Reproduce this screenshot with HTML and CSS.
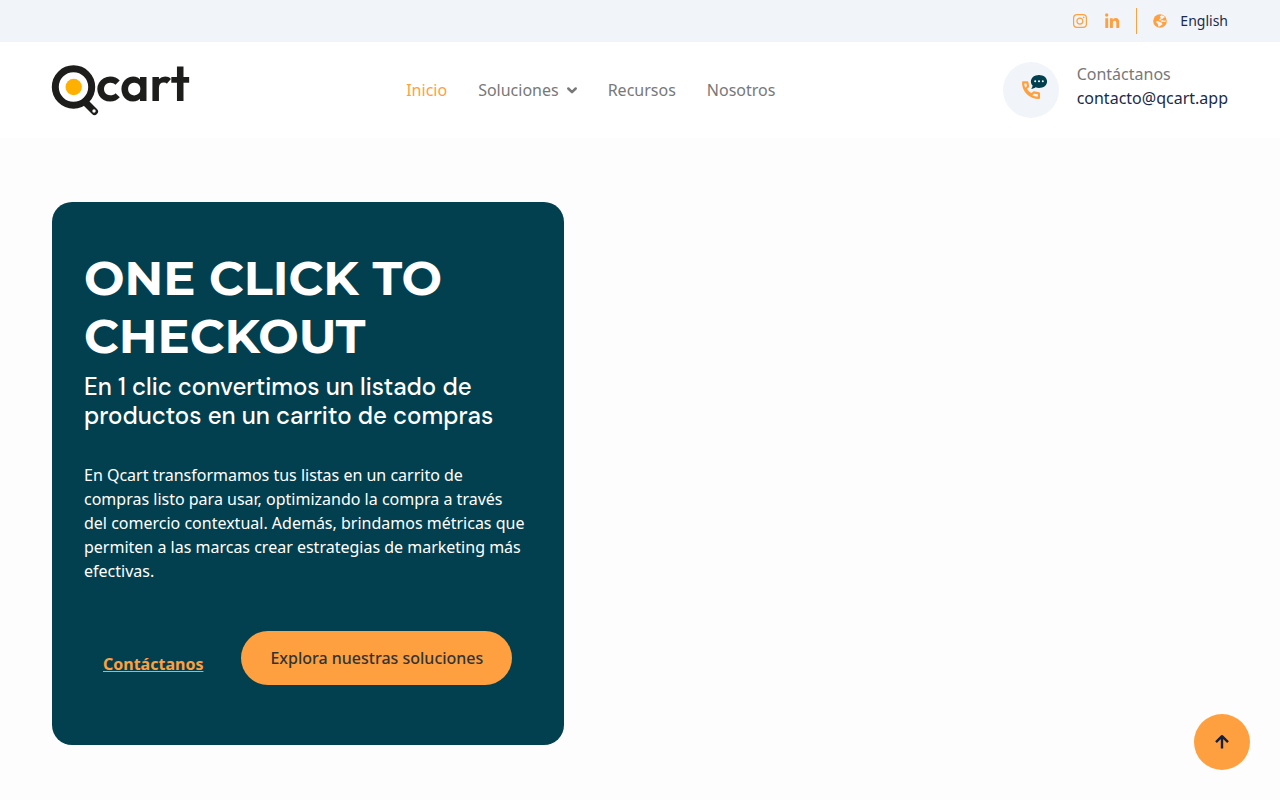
FILE: index.html
```html
<!DOCTYPE html>
<html lang="es">
<head>
  <meta charset="utf-8">
  <meta name="viewport" content="width=device-width, initial-scale=1">
  <title>Qcart</title>
  <link rel="stylesheet" href="styles.css">
</head>
<body>
  <div class="topbar">
    <div class="social">
      <a href="#" aria-label="Instagram">
        <svg width="14" height="14" viewBox="0 0 14 14" fill="none" stroke="currentColor" stroke-width="1.2">
          <rect x="0.6" y="0.6" width="12.8" height="12.8" rx="3.4"/>
          <circle cx="6.9" cy="7.1" r="3"/>
          <circle cx="10.7" cy="3.4" r="0.8" fill="currentColor" stroke="none"/>
        </svg>
      </a>
      <a href="#" aria-label="LinkedIn">
        <svg width="14" height="14" viewBox="0 0 14 14" fill="currentColor">
          <circle cx="1.7" cy="1" r="1.7"/>
          <path d="M.3 4.2h2.900V14H.3zM5 4.200h2.800V6c.5-.9 1.400-1.900 2.800-1.900 2.800 0 3.600 1.800 3.600 4.300V14h-2.900V9.300c0-1.200-.2-2.500-1.600-2.500S7.900 7.900 7.900 9.200V14H5z"/>
        </svg>
      </a>
    </div>
    <a class="language" href="#">
      <svg width="14" height="14" viewBox="0 0 14 14">
        <circle cx="7" cy="7" r="6.800" fill="#ffa040"/>
        <g fill="#f1f5fa">
          <path d="M6.800 2.600l1.900-1.300 2.100.7 1.300 1.300-1.200.2-.9 1.100-1.700.6-.9 1.200-1.300-.5.6-1 1.100-.5-.2-.9z"/>
          <path d="M7.600 7l1.900-1 1.500.7 1.800-.3-.1 1.400-1.600.1-.9-.5-1.200.6z"/>
          <path d="M3.300 7.200l1.700-.2 1.900 1.100 1.900.7.7 1.400-1.400 1.400-1 .2-1.300 1.300-.8-2-.2-1.400-1.300-.9z"/>
        </g>
      </svg>
      English
    </a>
  </div>

  <header class="header">
    <a class="logo" href="#" aria-label="Qcart">
      <svg width="136" height="52" viewBox="0 0 136 52">
        <circle cx="21.500" cy="23" r="18.200" fill="#fff" stroke="#1d1d1b" stroke-width="7"/>
        <path d="M33 38l9.500 9.500" stroke="#1d1d1b" stroke-width="7" stroke-linecap="round"/>
        <circle cx="42" cy="47" r="1.700" fill="#fff"/>
        <circle cx="21.700" cy="23" r="8.200" fill="#ffb000"/>
        <text class="wordmark" x="44" y="37">cart</text>
      </svg>
    </a>
    <nav class="nav" aria-label="Principal">
      <a class="active" href="#">Inicio</a>
      <a class="has-menu" href="#">Soluciones
        <svg width="10" height="7" viewBox="0 0 10 7"><path d="M1.300 1.500L5 5.200l3.700-3.700" fill="none" stroke="currentColor" stroke-width="2.500" stroke-linecap="round" stroke-linejoin="round"/></svg>
      </a>
      <a href="#">Recursos</a>
      <a href="#">Nosotros</a>
    </nav>
    <div class="contact">
      <span class="contact-icon">
        <svg width="28" height="28" viewBox="0 0 28 28">
          <path d="M6.100 6.300h4.200l.8 4.200-2.400 2.300c1.400 2.700 3.200 4.500 5.800 5.900l2.400-2.400 5 1v4.600C12.900 21.900 6.100 15.100 6.100 6.300z" fill="none" stroke="#ffa040" stroke-width="2.200" stroke-linejoin="round"/>
          <path d="M22-1.100c4.600 0 8.100 2.800 8.100 6.500s-3.500 6.500-8.100 6.500c-1.300 0-2.400-.2-3.400-.6-1.300 1-2.900 1.600-4.500 1.500.9-1 1.500-2.200 1.500-3.300-1.100-1.100-1.700-2.500-1.700-4.100 0-3.700 3.500-6.500 8.100-6.500z" fill="#03404f"/>
          <g fill="#fff"><circle cx="18.200" cy="5.200" r="1"/><circle cx="22" cy="5.200" r="1"/><circle cx="25.800" cy="5.200" r="1"/></g>
        </svg>
      </span>
      <div class="contact-text">
        <span>Contáctanos</span>
        <a href="mailto:contacto@qcart.app">contacto@qcart.app</a>
      </div>
    </div>
  </header>

  <main class="hero">
    <section class="card">
      <h1>ONE CLICK TO CHECKOUT</h1>
      <h2>En 1 clic convertimos un listado de productos en un carrito de compras</h2>
      <p>En Qcart transformamos tus listas en un carrito de compras listo para usar, optimizando la compra a través del comercio contextual. Además, brindamos métricas que permiten a las marcas crear estrategias de marketing más efectivas.</p>
      <div class="actions">
        <a class="link" href="#">Contáctanos</a>
        <a class="button" href="#">Explora nuestras soluciones</a>
      </div>
    </section>
  </main>

  <button class="to-top" type="button" aria-label="Volver arriba">
    <svg width="16" height="16" viewBox="0 0 16 16"><path d="M8 14.500V2.500M2 8.200L8 2.200l6 6" fill="none" stroke="currentColor" stroke-width="2.400" stroke-linejoin="round"/></svg>
  </button>
</body>
</html>
```
FILE: styles.css
```css
* {
  box-sizing: border-box;
}

body {
  margin: 0;
  background: #fdfdfd;
  color: #787878;
  font: 16px/24px "Noto Sans", "Open Sans", sans-serif;
}

a {
  color: inherit;
  text-decoration: none;
}

svg {
  display: block;
  flex: none;
  overflow: visible;
}

.topbar {
  display: flex;
  justify-content: flex-end;
  padding: 8px 52px;
  background: #f1f5fa;
  color: #1b2b4b;
  font-size: 14px;
  line-height: 26px;
}

.social {
  display: flex;
  align-items: center;
  gap: 18px;
  padding-right: 17px;
  border-right: 1px solid #ffa040;
  color: #ffa040;
}

.language {
  display: flex;
  align-items: center;
  gap: 13px;
  padding-left: 16px;
}

.header {
  display: flex;
  align-items: center;
  justify-content: space-between;
  padding: 20px 52px;
  background: #fff;
}

.wordmark {
  fill: #1d1d1b;
  font: 600 50px Outfit, Poppins, Quicksand, Lato, sans-serif;
}

.nav {
  display: flex;
  gap: 31px;
  margin-right: 9px;
}

.has-menu {
  display: flex;
  align-items: center;
  gap: 8px;
}

.active {
  color: #ffa040;
}

.contact {
  display: flex;
  gap: 18px;
}

.contact-icon {
  display: grid;
  place-items: center;
  width: 56px;
  height: 56px;
  border-radius: 50%;
  background: #f1f5fa;
}

.contact-text {
  display: flex;
  flex-direction: column;
}

.contact-text a {
  color: #1b2b4b;
}

.hero {
  padding: 64px 52px 56px;
}

.card {
  max-width: 512px;
  padding: 47px 36px 60px 32px;
  border-radius: 20px;
  background: #03404f;
  color: #fff;
}

h1 {
  margin: 0 0 7px;
  font: 700 48px/58px Montserrat, Inter, sans-serif;
}

h2 {
  margin: 0 0 33px;
  font: 500 24px/29px "DM Sans", Inter, sans-serif;
}

p {
  margin: 0 0 48px;
}

.actions {
  display: flex;
  align-items: center;
  gap: 38px;
  padding-left: 19px;
}

.link {
  padding-top: 12px;
  color: #ffa040;
  font-weight: 700;
  text-decoration: underline;
}

.button {
  padding: 15px 29px;
  border-radius: 27px;
  background: #ffa040;
  color: #333;
  font-weight: 500;
}

.to-top {
  position: fixed;
  right: 30px;
  bottom: 30px;
  display: grid;
  place-items: center;
  width: 56px;
  height: 56px;
  padding: 0;
  border: 0;
  border-radius: 50%;
  background: #ffa040;
  color: #14213d;
}
```
